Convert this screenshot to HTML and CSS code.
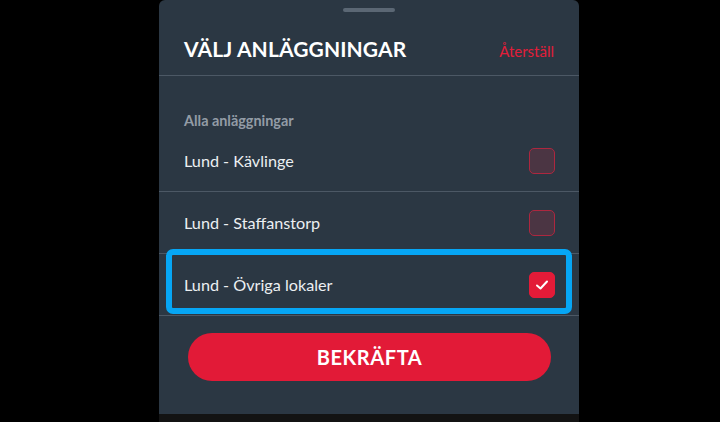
FILE: index.html
```html
<!DOCTYPE html>
<html lang="sv">
<head>
    <meta charset="UTF-8">
    <meta name="viewport" content="width=device-width, initial-scale=1.0">
    <title>Välj anläggningar</title>
    <link rel="stylesheet" href="styles.css">
</head>
<body>
    <div class="screen">
        <div class="sheet">
            <div class="handle"></div>

            <div class="sheet-header">
                <h1>VÄLJ ANLÄGGNINGAR</h1>
                <a class="reset" href="#">Återställ</a>
            </div>

            <div class="group-label">Alla anläggningar</div>

            <ul class="facility-list">
                <li class="facility">
                    <span>Lund - Kävlinge</span>
                    <span class="checkbox"></span>
                </li>
                <li class="facility">
                    <span>Lund - Staffanstorp</span>
                    <span class="checkbox"></span>
                </li>
                <li class="facility focused">
                    <span>Lund - Övriga lokaler</span>
                    <span class="checkbox checked">
                        <svg width="14" height="12" viewBox="0 0 14 12">
                            <path d="M2 6.5 L5.5 9.5 L12 2.5" fill="none" stroke="#fff" stroke-width="2" stroke-linecap="round" stroke-linejoin="round"/>
                        </svg>
                    </span>
                </li>
            </ul>

            <button class="confirm">BEKRÄFTA</button>
        </div>
        <div class="bottom-bar"></div>
    </div>
</body>
</html>
```

FILE: styles.css
```css
body {
    margin: 0;
    background: #000;
    font-family: Lato, "Open Sans", sans-serif;
    color: #eceff2;
}
.screen {
    height: 422px;
    display: flex;
    flex-direction: column;
    overflow: hidden;
}
.sheet {
    flex: 1;
    width: 420px;
    margin-left: 159px;
    background: #2b3743;
    border-radius: 6px 6px 0 0;
    display: flex;
    flex-direction: column;
}
.bottom-bar {
    height: 8px;
    margin-left: 159px;
    width: 420px;
    background: #131313;
}
.handle {
    width: 52px;
    height: 4px;
    margin: 8px auto 0;
    border-radius: 2px;
    background: #5b6774;
}
.sheet-header {
    display: flex;
    justify-content: space-between;
    align-items: center;
    padding: 25px 25px 14px;
    border-bottom: 1px solid #4c5865;
}
.sheet-header h1 {
    margin: 0;
    font-size: 21px;
    line-height: 24px;
    font-weight: 700;
    letter-spacing: 0.12px;
    color: #fff;
}
.reset {
    color: #e21d39;
    text-decoration: none;
    font-size: 15px;
    margin-top: 4px;
}
.group-label {
    padding: 36px 25px 0;
    font-size: 14.4px;
    line-height: 18px;
    font-weight: 700;
    color: #939ca6;
}
.facility-list {
    list-style: none;
    margin: 0;
    padding: 0;
}
.facility {
    position: relative;
    display: flex;
    justify-content: space-between;
    align-items: center;
    height: 61px;
    padding: 0 24px 0 25px;
    border-bottom: 1px solid #4c5865;
    font-size: 16.2px;
}
.focused::after {
    content: "";
    position: absolute;
    top: -5px;
    left: 7px;
    right: 7px;
    bottom: 1px;
    border: 6px solid #06a6f5;
    border-radius: 7px;
    pointer-events: none;
}
.checkbox {
    width: 24px;
    height: 24px;
    border: 1px solid #ad273f;
    border-radius: 5px;
    background: #4b3543;
    display: flex;
    align-items: center;
    justify-content: center;
}
.checkbox.checked {
    background: #e31b38;
    border-color: #e31b38;
}
.confirm {
    margin: 17px 28px 0 29px;
    height: 48px;
    border: none;
    border-radius: 24px;
    background: #e21a37;
    color: #fff;
    font-family: Lato, "Open Sans", sans-serif;
    font-size: 20px;
    font-weight: 700;
    letter-spacing: 0.6px;
    cursor: pointer;
}
```
